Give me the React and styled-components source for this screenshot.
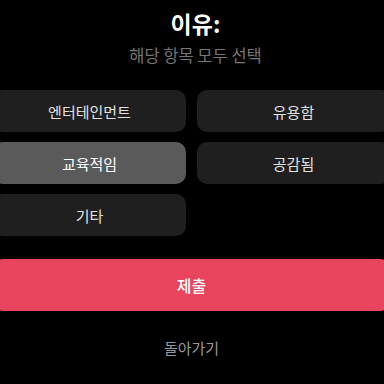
import React, { useState } from "react";
import styled, { createGlobalStyle } from "styled-components";

const GlobalStyle = createGlobalStyle`
  html, body {
    margin: 0;
    padding: 0;
    background: #000;
    overflow: hidden;
  }
  body {
    font-family: "Noto Sans CJK KR", "Noto Sans", sans-serif;
  }
`;

const Screen = styled.div`
  width: 384px;
  height: 384px;
  overflow: hidden;
  background: #000;
`;

const Sheet = styled.div`
  width: 397px;
  margin-left: -7px;
  display: flex;
  flex-direction: column;
  align-items: stretch;
`;

const Header = styled.div`
  display: flex;
  flex-direction: column;
  align-items: center;
  padding-top: 7px;
  padding-left: 7px;
  box-sizing: border-box;
  width: 384px;
  margin-left: 7px;
`;

const Title = styled.h2`
  margin: 0;
  color: #fff;
  font-size: 23px;
  font-weight: 700;
  line-height: 32px;
`;

const Subtitle = styled.p`
  margin: 0;
  margin-top: 4px;
  color: #767676;
  font-size: 16.5px;
  line-height: 24px;
`;

const Grid = styled.div`
  display: grid;
  grid-template-columns: 1fr 1fr;
  column-gap: 11px;
  row-gap: 10px;
  margin-top: 23px;
`;

const Option = styled.button`
  height: 42px;
  border: none;
  border-radius: 10px;
  background: ${(p) => (p.$selected ? "#5a5a5a" : "#1f1f1f")};
  color: ${(p) => (p.$selected ? "#fff" : "#e2e2e2")};
  font-family: inherit;
  font-size: 15px;
  font-weight: 400;
  cursor: pointer;
  padding: 0;
`;

const Submit = styled.button`
  margin-top: 23px;
  height: 52px;
  border: none;
  border-radius: 10px;
  background: #e8445d;
  color: #fff;
  font-family: inherit;
  font-size: 16px;
  font-weight: 500;
  cursor: pointer;
`;

const Back = styled.button`
  margin-top: 20px;
  background: none;
  border: none;
  color: #9a9a9a;
  font-family: inherit;
  font-size: 15px;
  line-height: 32px;
  cursor: pointer;
`;

const options = ["엔터테인먼트", "유용함", "교육적임", "공감됨", "기타"];

const App = () => {
  const [selected, setSelected] = useState(["교육적임"]);

  const toggle = (o) =>
    setSelected((s) => (s.includes(o) ? s.filter((x) => x !== o) : [...s, o]));

  return (
    <Screen>
      <GlobalStyle />
      <Sheet>
        <Header>
          <Title>이유:</Title>
          <Subtitle>해당 항목 모두 선택</Subtitle>
        </Header>
        <Grid>
          {options.map((o) => (
            <Option key={o} $selected={selected.includes(o)} onClick={() => toggle(o)}>
              {o}
            </Option>
          ))}
        </Grid>
        <Submit>제출</Submit>
        <Back>돌아가기</Back>
      </Sheet>
    </Screen>
  );
};

export default App;
